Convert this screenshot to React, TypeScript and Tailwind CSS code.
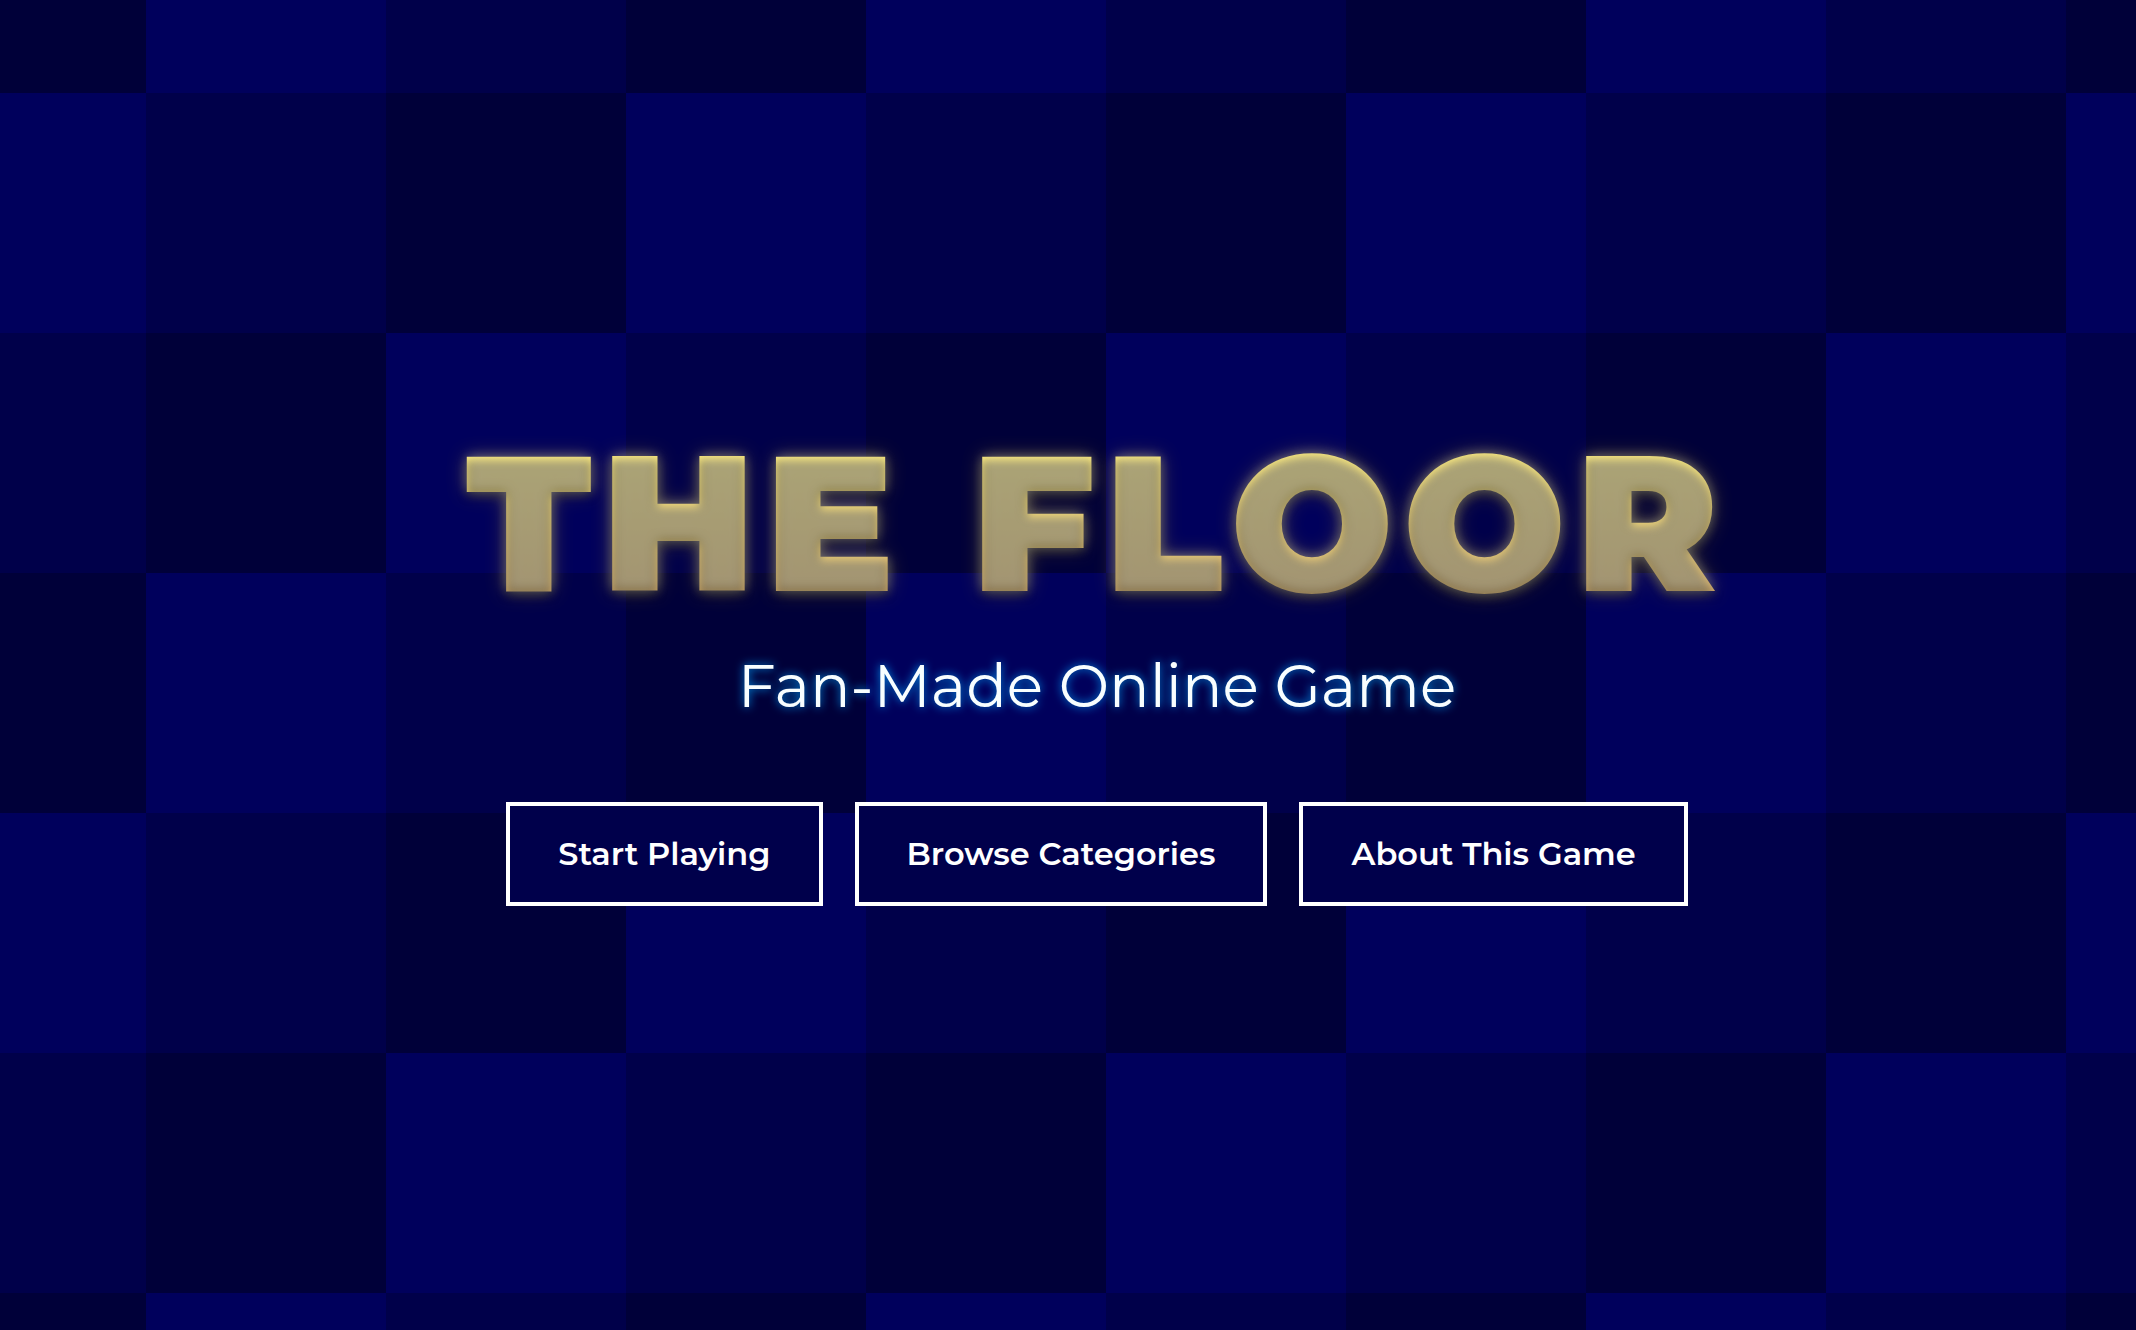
const TILE_COLORS = ["bg-[#000039]", "bg-[#00005c]", "bg-[#00004a]"];
// Colour index of the first tile in each row.
const ROW_STARTS = [0, 1, 2, 0, 1, 2, 0];
const TILES_PER_ROW = 12;

function FloorTiles() {
  return (
    <div aria-hidden="true" className="absolute inset-0 overflow-hidden bg-[#000039]">
      <div className="-mt-[147px] -ml-[94px] grid w-max grid-cols-[repeat(12,240px)] auto-rows-[240px]">
        {ROW_STARTS.flatMap((start, row) =>
          Array.from({ length: TILES_PER_ROW }, (_, col) => (
            <div key={`${row}-${col}`} className={TILE_COLORS[(start + col) % 3]} />
          )),
        )}
      </div>
    </div>
  );
}

const ACTIONS = ["Start Playing", "Browse Categories", "About This Game"];

export default function App() {
  return (
    <div className="relative min-h-screen bg-[#000039] font-['Montserrat','Inter',sans-serif] text-white">
      <FloorTiles />
      <main className="relative flex min-h-screen flex-col items-center justify-center pb-[22px] pl-[58px]">
        <h1 className="bg-gradient-to-b from-[#fff080] from-20% to-[#d8ac6c] to-80% bg-clip-text text-[192px] leading-[240px] font-black tracking-wider text-transparent [text-shadow:0_0_12px_rgba(255,255,255,0.35),0_4px_8px_rgba(0,0,0,0.5),0_0_20px_rgba(255,215,0,0.3)]">
          THE FLOOR
        </h1>
        <p className="mt-2 text-[60px] leading-[72px] text-[#f8feff] [text-shadow:0_0_10px_#0096f0]">
          Fan-Made Online Game
        </p>
        <nav className="mt-20 flex gap-8">
          {ACTIONS.map((label) => (
            <button
              key={label}
              type="button"
              className="border-4 border-white bg-[#00004b] px-12 py-6 text-[32px] leading-[48px] font-semibold whitespace-nowrap"
            >
              {label}
            </button>
          ))}
        </nav>
      </main>
    </div>
  );
}
